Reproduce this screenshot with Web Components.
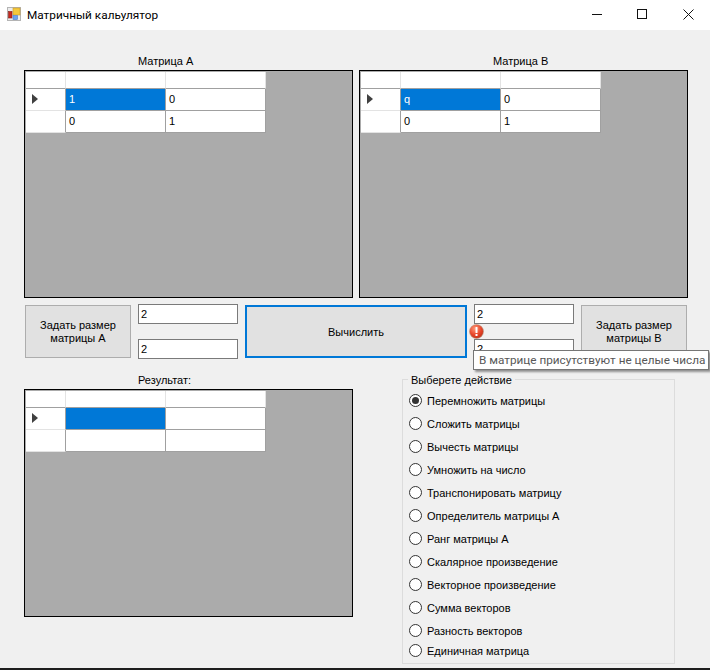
<!DOCTYPE html>
<html lang="ru">
<head>
<meta charset="utf-8">
<title>Матричный кальулятор</title>
<style>
  html, body { margin: 0; padding: 0; background: #f0f0f0; overflow: hidden; }
  body { font: 11px "Liberation Sans", Arial, sans-serif; color: #000; }
</style>
</head>
<body>
<calc-window>
  <title-bar slot="title">Матричный кальулятор</title-bar>

  <div slot="matrices" style="display:contents">
    <matrix-panel label="Матрица А" offset="114" rows='[["1","0"],["0","1"]]'></matrix-panel>
    <matrix-panel label="Матрица B" offset="134" rows='[["q","0"],["0","1"]]'></matrix-panel>
  </div>

  <size-button slot="size-a">Задать размер<br>матрицы А</size-button>
  <size-fields slot="fields-a" first="2" second="2"></size-fields>
  <compute-button slot="compute">Вычислить</compute-button>
  <size-fields slot="fields-b" first="2" second="2">
    <error-tip>В матрице присутствуют не целые числа</error-tip>
  </size-fields>
  <size-button slot="size-b">Задать размер<br>матрицы B</size-button>

  <matrix-panel slot="result" label="Результат:" offset="114" rows='[["",""],["",""]]'></matrix-panel>

  <action-group slot="actions" legend="Выберете действие">
    <radio-row checked>Перемножить матрицы</radio-row>
    <radio-row>Сложить матрицы</radio-row>
    <radio-row>Вычесть матрицы</radio-row>
    <radio-row>Умножить на число</radio-row>
    <radio-row>Транспонировать матрицу</radio-row>
    <radio-row>Определитель матрицы А</radio-row>
    <radio-row>Ранг матрицы А</radio-row>
    <radio-row>Скалярное произведение</radio-row>
    <radio-row>Векторное произведение</radio-row>
    <radio-row>Сумма векторов</radio-row>
    <radio-row>Разность векторов</radio-row>
    <radio-row>Единичная матрица</radio-row>
  </action-group>
</calc-window>

<script>
class CalcWindow extends HTMLElement {
  constructor() {
    super();
    this.attachShadow({ mode: "open" }).innerHTML = `
      <style>
        :host { display: flex; flex-direction: column; width: 710px; height: 670px; box-sizing: border-box;
                background: #f0f0f0; border-bottom: 2px solid #1e1e1e; }
        .form { flex: 1; padding: 24px 0 0 24px; }
        .matrices { display: flex; gap: 6px; }
        .controls { display: flex; margin-top: 6px; height: 55px; }
        .controls ::slotted([slot="size-a"]) { margin: 1px 0 1px 1px; }
        .controls ::slotted([slot="fields-a"]) { margin-left: 7px; }
        .controls ::slotted([slot="compute"]) { margin: 1px 0 1px 7px; }
        .controls ::slotted([slot="fields-b"]) { margin-left: 7px; }
        .controls ::slotted([slot="size-b"]) { margin: 1px 0 1px 7px; }
        .bottom { display: flex; margin-top: 14px; }
        .bottom ::slotted([slot="actions"]) { margin-left: 49px; }
      </style>
      <slot name="title"></slot>
      <div class="form">
        <div class="matrices"><slot name="matrices"></slot></div>
        <div class="controls">
          <slot name="size-a"></slot>
          <slot name="fields-a"></slot>
          <slot name="compute"></slot>
          <slot name="fields-b"></slot>
          <slot name="size-b"></slot>
        </div>
        <div class="bottom">
          <slot name="result"></slot>
          <slot name="actions"></slot>
        </div>
      </div>`;
  }
}
customElements.define("calc-window", CalcWindow);

class TitleBar extends HTMLElement {
  constructor() {
    super();
    this.attachShadow({ mode: "open" }).innerHTML = `
      <style>
        :host { display: flex; align-items: center; height: 30px; background: #fff; flex: none; }
        .app { margin: 0 0 2px 7px; width: 14px; height: 14px; display: block; }
        .name { margin: 0 0 0 6px; font: 11.8px Roboto, "Noto Sans", sans-serif; color: #000; }
        .btns { margin-left: auto; display: flex; }
        .btn { width: 46px; height: 30px; display: block; }
      </style>
      <svg class="app" viewBox="0 0 14 14">
        <rect x="0.5" y="0.5" width="13" height="13" fill="#ececec" stroke="#b4b4b4"/>
        <rect x="6" y="1" width="7" height="7" fill="#f4c83c" stroke="#c89a28" stroke-width=".6"/>
        <rect x="1.5" y="4.5" width="3.5" height="6.5" fill="#c8281e" stroke="#84201a" stroke-width=".6"/>
        <rect x="6" y="8.5" width="4.5" height="4" fill="#6ba4f0" stroke="#4a7cc8" stroke-width=".6"/>
      </svg>
      <span class="name"><slot></slot></span>
      <div class="btns">
        <svg class="btn" viewBox="0 0 46 30"><path d="M20 14.5h10" stroke="#111" fill="none"/></svg>
        <svg class="btn" viewBox="0 0 46 30"><rect x="19.5" y="9.5" width="9" height="9" stroke="#111" fill="none"/></svg>
        <svg class="btn" viewBox="0 0 46 30"><path d="M19.5 9.5l10 10M29.5 9.5l-10 10" stroke="#111" fill="none"/></svg>
      </div>`;
  }
}
customElements.define("title-bar", TitleBar);

class MatrixPanel extends HTMLElement {
  constructor() {
    super();
    this.attachShadow({ mode: "open" });
  }

  connectedCallback() {
    const rows = JSON.parse(this.getAttribute("rows"));
    const offset = this.getAttribute("offset") || 0;
    const body = rows.map((row, i) => `
      <div class="rh">
        ${i === 0 ? '<svg width="6" height="10" viewBox="0 0 6 10"><path d="M0 0l6 5-6 5z" fill="#404040"/></svg>' : ""}
      </div>
      ${row.map((v, j) => `<div class="cell ${i === 0 && j === 0 ? "sel" : ""}">${v}</div>`).join("")}`).join("");
    this.shadowRoot.innerHTML = `
      <style>
        :host { display: block; width: 329px; }
        .label { height: 14px; line-height: 14px; padding-left: ${offset}px; margin-bottom: 2px; white-space: nowrap; }
        .view { box-sizing: border-box; height: 228px; border: 1px solid #000; padding: 1px; background: #ababab; }
        .grid { display: grid; grid-template-columns: 40px 100px 100px; grid-template-rows: 17px 22px 22px; width: 240px; }
        .grid > div { box-sizing: border-box; background: #fff; }
        .hd { border-right: 1px solid #e3e3e3; border-bottom: 1px solid #a0a0a0; }
        .rh { display: flex; align-items: center; padding: 0 0 1px 6px; border-right: 1px solid #a0a0a0; border-bottom: 1px solid #e3e3e3; }
        .cell { line-height: 21px; padding-left: 3px; border-right: 1px solid #a0a0a0; border-bottom: 1px solid #a0a0a0; }
        .grid > .sel { background: #0078d7; color: #fff; }
      </style>
      <div class="label">${this.getAttribute("label")}</div>
      <div class="view">
        <div class="grid">
          <div class="hd"></div><div class="hd"></div><div class="hd"></div>
          ${body}
        </div>
      </div>`;
  }
}
customElements.define("matrix-panel", MatrixPanel);

class SizeButton extends HTMLElement {
  constructor() {
    super();
    this.attachShadow({ mode: "open" }).innerHTML = `
      <style>
        :host { display: flex; align-items: center; justify-content: center; box-sizing: border-box;
                width: 106px; border: 1px solid #adadad; background: #e1e1e1;
                text-align: center; line-height: 13px; }
      </style>
      <div><slot></slot></div>`;
  }
}
customElements.define("size-button", SizeButton);

class ComputeButton extends HTMLElement {
  constructor() {
    super();
    this.attachShadow({ mode: "open" }).innerHTML = `
      <style>
        :host { display: flex; align-items: center; justify-content: center; box-sizing: border-box;
                width: 222px; border: 2px solid #0078d7; background: #e1e1e1; }
      </style>
      <slot></slot>`;
  }
}
customElements.define("compute-button", ComputeButton);

class SizeFields extends HTMLElement {
  constructor() {
    super();
    this.attachShadow({ mode: "open" });
  }

  connectedCallback() {
    this.shadowRoot.innerHTML = `
      <style>
        :host { display: flex; flex-direction: column; justify-content: space-between; position: relative; width: 100px; }
        .field { box-sizing: border-box; height: 20px; line-height: 18px; padding-left: 2px;
                 border: 1px solid #7a7a7a; background: #fff; }
      </style>
      <div class="field">${this.getAttribute("first")}</div>
      <div class="field">${this.getAttribute("second")}</div>
      <slot></slot>`;
  }
}
customElements.define("size-fields", SizeFields);

class ErrorTip extends HTMLElement {
  constructor() {
    super();
    this.attachShadow({ mode: "open" }).innerHTML = `
      <style>
        :host { display: block; position: absolute; left: 0; top: 0; }
        .icon { position: absolute; left: -5px; top: 20px; width: 15px; height: 15px; display: block; }
        .tip { position: absolute; left: -1px; top: 46px; box-sizing: border-box; width: 236px; height: 20px;
               padding-left: 5px; white-space: nowrap;
               font: 11.75px/18px Roboto, "Noto Sans", sans-serif;
               border: 1px solid #767676; background: #fff; color: #575757;
               box-shadow: 2px 2px 2px rgba(0,0,0,.4); }
      </style>
      <svg class="icon" viewBox="0 0 15 15">
        <defs>
          <radialGradient id="r" cx=".4" cy=".3" r=".8">
            <stop offset="0" stop-color="#ff9a7a"/><stop offset=".55" stop-color="#e8452a"/><stop offset="1" stop-color="#b52a12"/>
          </radialGradient>
        </defs>
        <circle cx="7.5" cy="7.5" r="7" fill="url(#r)" stroke="#b5a08c" stroke-width=".6"/>
        <rect x="6.5" y="3" width="2" height="6" rx=".6" fill="#fff"/>
        <rect x="6.5" y="10" width="2" height="2" fill="#fff"/>
      </svg>
      <div class="tip"><slot></slot></div>`;
  }
}
customElements.define("error-tip", ErrorTip);

class ActionGroup extends HTMLElement {
  constructor() {
    super();
    this.attachShadow({ mode: "open" });
  }

  connectedCallback() {
    this.shadowRoot.innerHTML = `
      <style>
        :host { display: block; width: 273px; }
        fieldset { box-sizing: border-box; margin: 0; height: 291px; padding: 3px 0 0 6px; border: 1px solid #dcdcdc; }
        legend { margin-left: -1px; padding: 0 3px; height: 13px; line-height: 14px; }
      </style>
      <fieldset>
        <legend>${this.getAttribute("legend")}</legend>
        <slot></slot>
      </fieldset>`;
  }
}
customElements.define("action-group", ActionGroup);

class RadioRow extends HTMLElement {
  constructor() {
    super();
    this.attachShadow({ mode: "open" });
  }

  connectedCallback() {
    const dot = this.hasAttribute("checked") ? '<circle cx="6.5" cy="6.5" r="3.5" fill="#333"/>' : "";
    this.shadowRoot.innerHTML = `
      <style>
        :host { display: flex; align-items: center; height: 23px; gap: 5px; }
        :host(:last-child) { height: 17px; }
        svg { width: 13px; height: 13px; flex: none; }
      </style>
      <svg viewBox="0 0 13 13"><circle cx="6.5" cy="6.5" r="6" fill="#fff" stroke="#333"/>${dot}</svg>
      <span><slot></slot></span>`;
  }
}
customElements.define("radio-row", RadioRow);
</script>
</body>
</html>
